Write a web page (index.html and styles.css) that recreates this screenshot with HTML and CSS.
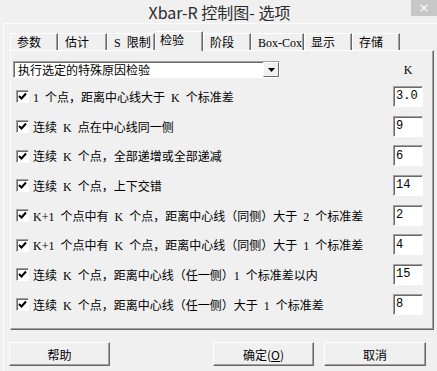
FILE: index.html
```html
<!DOCTYPE html>
<html lang="zh-CN">
<head>
    <meta charset="UTF-8">
    <title>Xbar-R 控制图- 选项</title>
    <link rel="stylesheet" href="styles.css">
</head>
<body>
    <div class="window">
        <div class="titlebar">
            <span class="title">Xbar-R 控制图- 选项</span>
            <span class="close">×</span>
        </div>
        <div class="client">
            <div class="tabs">
                <div class="tab" style="width: 48px">参数</div>
                <div class="tab" style="width: 49px">估计</div>
                <div class="tab" style="width: 48px"><span class="en">S </span>限制</div>
                <div class="tab active" style="width: 48px">检验</div>
                <div class="tab" style="width: 48px">阶段</div>
                <div class="tab" style="width: 53px"><span class="en">Box-Cox</span></div>
                <div class="tab" style="width: 48px">显示</div>
                <div class="tab" style="width: 48px">存储</div>
            </div>
            <div class="panel">
                <div class="top-row">
                    <div class="combo">
                        <span class="combo-text">执行选定的特殊原因检验</span>
                        <span class="combo-btn">
                            <svg width="7" height="4" viewBox="0 0 7 4"><path d="M0 0h7L3.5 4z" fill="#000"/></svg>
                        </span>
                    </div>
                    <span class="k-head">K</span>
                </div>
                <div class="rows">
                    <div class="row">
                        <span class="check"><svg width="9" height="9" viewBox="0 0 9 9"><path d="M1 4l2.5 2.5L8 1.5" fill="none" stroke="#000" stroke-width="2"/></svg></span>
                        <span class="label"><span class="en">1 </span>个点，距离中心线大于<span class="en"> K </span>个标准差</span>
                        <input class="kval" type="text" value="3.0" readonly>
                    </div>
                    <div class="row">
                        <span class="check"><svg width="9" height="9" viewBox="0 0 9 9"><path d="M1 4l2.5 2.5L8 1.5" fill="none" stroke="#000" stroke-width="2"/></svg></span>
                        <span class="label">连续<span class="en"> K </span>点在中心线同一侧</span>
                        <input class="kval" type="text" value="9" readonly>
                    </div>
                    <div class="row">
                        <span class="check"><svg width="9" height="9" viewBox="0 0 9 9"><path d="M1 4l2.5 2.5L8 1.5" fill="none" stroke="#000" stroke-width="2"/></svg></span>
                        <span class="label">连续<span class="en"> K </span>个点，全部递增或全部递减</span>
                        <input class="kval" type="text" value="6" readonly>
                    </div>
                    <div class="row">
                        <span class="check"><svg width="9" height="9" viewBox="0 0 9 9"><path d="M1 4l2.5 2.5L8 1.5" fill="none" stroke="#000" stroke-width="2"/></svg></span>
                        <span class="label">连续<span class="en"> K </span>个点，上下交错</span>
                        <input class="kval" type="text" value="14" readonly>
                    </div>
                    <div class="row">
                        <span class="check"><svg width="9" height="9" viewBox="0 0 9 9"><path d="M1 4l2.5 2.5L8 1.5" fill="none" stroke="#000" stroke-width="2"/></svg></span>
                        <span class="label"><span class="en">K+1 </span>个点中有<span class="en"> K </span>个点，距离中心线（同侧）大于<span class="en"> 2 </span>个标准差</span>
                        <input class="kval" type="text" value="2" readonly>
                    </div>
                    <div class="row">
                        <span class="check"><svg width="9" height="9" viewBox="0 0 9 9"><path d="M1 4l2.5 2.5L8 1.5" fill="none" stroke="#000" stroke-width="2"/></svg></span>
                        <span class="label"><span class="en">K+1 </span>个点中有<span class="en"> K </span>个点，距离中心线（同侧）大于<span class="en"> 1 </span>个标准差</span>
                        <input class="kval" type="text" value="4" readonly>
                    </div>
                    <div class="row">
                        <span class="check"><svg width="9" height="9" viewBox="0 0 9 9"><path d="M1 4l2.5 2.5L8 1.5" fill="none" stroke="#000" stroke-width="2"/></svg></span>
                        <span class="label">连续<span class="en"> K </span>个点，距离中心线（任一侧）<span class="en">1 </span>个标准差以内</span>
                        <input class="kval" type="text" value="15" readonly>
                    </div>
                    <div class="row">
                        <span class="check"><svg width="9" height="9" viewBox="0 0 9 9"><path d="M1 4l2.5 2.5L8 1.5" fill="none" stroke="#000" stroke-width="2"/></svg></span>
                        <span class="label">连续<span class="en"> K </span>个点，距离中心线（任一侧）大于<span class="en"> 1 </span>个标准差</span>
                        <input class="kval" type="text" value="8" readonly>
                    </div>
                </div>
            </div>
            <div class="buttons">
                <button class="btn">帮助</button>
                <button class="btn btn-ok">确定(<u>O</u>)</button>
                <button class="btn btn-cancel">取消</button>
            </div>
        </div>
    </div>
</body>
</html>
```

FILE: styles.css
```css
* {
    box-sizing: border-box;
}
body {
    margin: 0;
    background: #f0f0f0;
    font-family: "Noto Sans CJK SC", sans-serif;
    font-size: 12px;
    color: #000;
}
.en {
    font-family: "Liberation Serif", serif;
    font-size: 12px;
    word-spacing: 3px;
}
.window {
    position: relative;
    width: 437px;
    height: 371px;
    display: flex;
    flex-direction: column;
    background: #f0f0f0;
    overflow: hidden;
}
.titlebar {
    height: 23px;
    display: flex;
    align-items: center;
    justify-content: center;
    font-size: 16px;
    color: #2b2b2b;
    padding-left: 2px;
}
.close {
    position: absolute;
    top: 0;
    right: 0;
    width: 26px;
    height: 16px;
    background: #c7c7c7;
    color: #fff;
    font-family: "DejaVu Sans", sans-serif;
    font-size: 13px;
    line-height: 15px;
    text-align: center;
}
.client {
    flex: 1;
    margin-left: 3px;
    border-top: 1px solid #fdfdfd;
    border-left: 1px solid #fdfdfd;
    display: flex;
    flex-direction: column;
}
.tabs {
    position: relative;
    z-index: 1;
    display: flex;
    align-items: flex-end;
    height: 19px;
    margin: 7px 0 0 6px;
}
.tab {
    height: 17px;
    border-top: 1px solid #fff;
    border-left: 1px solid #fff;
    border-right: 1px solid #696969;
    box-shadow: inset -1px 0 #a0a0a0;
    padding: 0 0 0 6px;
    line-height: 16px;
    white-space: nowrap;
    background: #f0f0f0;
}
.tab.active {
    height: 20px;
    margin-bottom: -1px;
    padding-left: 4px;
}
.panel {
    height: 280px;
    margin: 0 3px 0 6px;
    border-top: 1px solid #fff;
    border-left: 1px solid #fff;
    border-right: 1px solid #696969;
    border-bottom: 1px solid #696969;
    box-shadow: inset -1px -1px #a0a0a0;
    padding: 10px 10px 0 2px;
}
.top-row {
    display: flex;
    align-items: center;
    height: 17px;
}
.combo {
    width: 267px;
    height: 17px;
    display: flex;
    align-items: stretch;
    background: #fff;
    border-top: 1px solid #a0a0a0;
    border-left: 1px solid #a0a0a0;
    border-bottom: 1px solid #fff;
    border-right: 1px solid #fff;
    box-shadow: inset 1px 1px #696969;
}
.combo-text {
    padding-left: 4px;
    line-height: 15px;
}
.combo-btn {
    margin-left: auto;
    width: 16px;
    display: flex;
    align-items: center;
    justify-content: center;
    background: #f0f0f0;
    border-top: 1px solid #fff;
    border-left: 1px solid #fff;
    border-right: 1px solid #696969;
    border-bottom: 1px solid #696969;
}
.k-head {
    margin-left: auto;
    margin-top: 2px;
    width: 30px;
    text-align: center;
    font-family: "Liberation Serif", serif;
    font-size: 12px;
}
.rows {
    margin-top: 4px;
}
.row {
    height: 29.7px;
    display: flex;
    align-items: center;
}
.check {
    width: 13px;
    height: 13px;
    margin-left: 3px;
    display: flex;
    align-items: center;
    justify-content: center;
    background: #fff;
    border-top: 1px solid #a0a0a0;
    border-left: 1px solid #a0a0a0;
    border-bottom: 1px solid #fff;
    border-right: 1px solid #fff;
    box-shadow: inset 1px 1px #696969;
}
.label {
    margin-left: 4px;
    white-space: nowrap;
}
.kval {
    margin-left: auto;
    margin-top: -1px;
    width: 30px;
    height: 21px;
    padding: 0 0 0 2px;
    font-family: "Liberation Mono", monospace;
    font-size: 12px;
    color: #000;
    background: #fff;
    border: 0;
    border-top: 1px solid #a0a0a0;
    border-left: 1px solid #a0a0a0;
    border-bottom: 1px solid #fff;
    border-right: 1px solid #fff;
    box-shadow: inset 1px 1px #696969;
    outline: none;
}
.buttons {
    display: flex;
    margin: 12px 11px 0 5px;
}
.btn {
    width: 101px;
    height: 24px;
    padding: 0;
    font-family: "Noto Sans CJK SC", sans-serif;
    font-size: 12px;
    color: #000;
    background: #f0f0f0;
    border-top: 1px solid #fff;
    border-left: 1px solid #fff;
    border-right: 1px solid #696969;
    border-bottom: 1px solid #696969;
    box-shadow: inset -1px -1px #a0a0a0;
}
.btn-ok {
    margin-left: auto;
}
.btn-cancel {
    margin-left: 10px;
    width: 102px;
}
```
